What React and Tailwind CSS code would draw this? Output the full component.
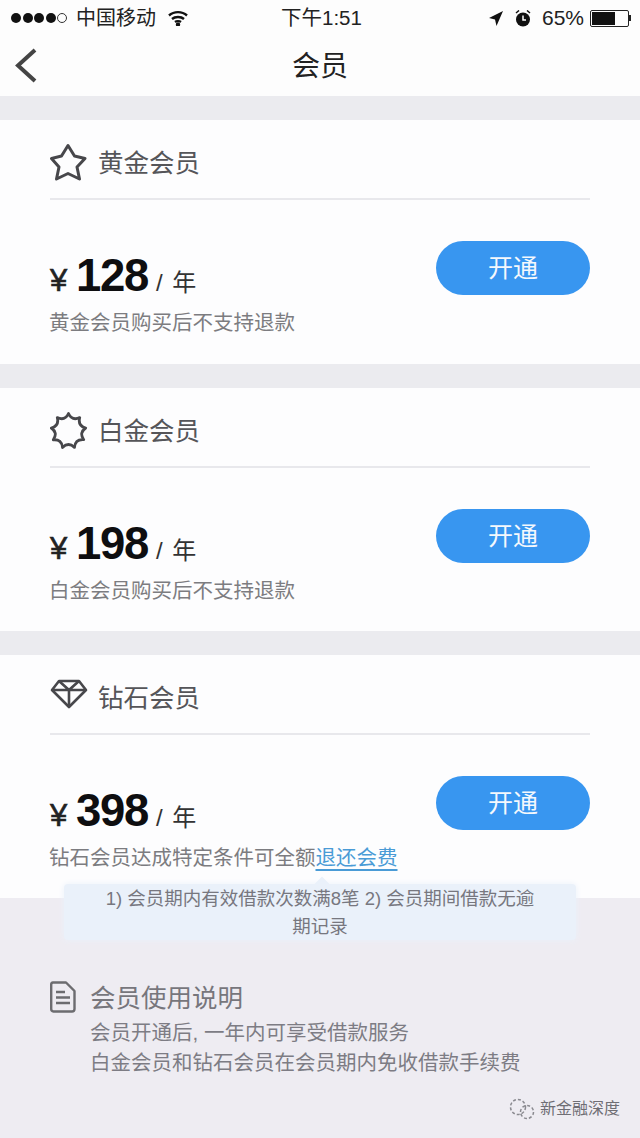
import React from "react";

const cjk = "font-['Liberation_Sans','Noto_Sans_CJK_SC',sans-serif]";

const StarIcon = () => (
  <svg width="38" height="40" viewBox="0 0 38 40" fill="none" stroke="#47474b" strokeWidth="3" strokeLinejoin="round">
    <path d="M18 2.500L24.500 13 35 15.500 27 24 29.500 36 18 30.500 6.500 36 9 24 1.500 15.500 11.500 13z" />
  </svg>
);

// nine pointed scalloped badge
const badgePath = () => {
  const pt = (r, a) => `${(18.5 + r * Math.sin(a)).toFixed(1)} ${(19 - r * Math.cos(a)).toFixed(1)}`;
  let d = `M${pt(17.5, 0)}`;
  for (let i = 0; i < 9; i++) {
    const step = (Math.PI * 2) / 9;
    d += `Q${pt(10.5, step * (i + 0.5))} ${pt(17.5, step * (i + 1))}`;
  }
  return d + "z";
};

const BadgeIcon = () => (
  <svg width="38" height="38" viewBox="0 0 38 38" fill="none" stroke="#47474b" strokeWidth="2.800" strokeLinejoin="round">
    <path d={badgePath()} />
  </svg>
);

const DiamondIcon = () => (
  <svg width="38" height="30" viewBox="0 0 38 30" fill="none" stroke="#47474b" strokeWidth="2.600" strokeLinejoin="round">
    <path d="M9 2h20l7 9-17 17L2 11z" />
    <path d="M2 11h34M9 2l10 9 10-9M19 11v17" />
  </svg>
);

const plans = [
  { name: "黄金会员", price: "128", note: "黄金会员购买后不支持退款", icon: <StarIcon />, height: "h-[244px]" },
  { name: "白金会员", price: "198", note: "白金会员购买后不支持退款", icon: <BadgeIcon />, height: "h-[243px]" },
  { name: "钻石会员", price: "398", note: "钻石会员达成特定条件可全额", link: "退还会费", icon: <DiamondIcon />, height: "h-[243px]", iconUp: true },
];

const PlanCard = ({ plan }) => (
  <div className={`${plan.height} bg-[#fdfdfe] px-[50px]`}>
    <div className="h-[80px] border-b-2 border-[#e8e8ec] flex items-center">
      <div className={`w-[38px] h-[38px] flex items-center justify-center ${plan.iconUp ? "mt-[-1px]" : "mt-[7px]"}`}>{plan.icon}</div>
      <span className="ml-[10px] mt-[7px] text-[25.500px] leading-[30px] text-[#555559]">{plan.name}</span>
    </div>
    <div className="flex justify-between pt-[41px]">
      <div>
        <div className="flex items-baseline h-[66px] pt-[7px]">
          <span className="text-[31px] leading-[40px] text-[#222] w-[26px] [-webkit-text-stroke:0.6px_#222]">¥</span>
          <span className="text-[45.500px] leading-[56px] font-bold text-[#0e0e10] tracking-[-1.300px]">{plan.price}</span>
          <span className="ml-[8px] text-[24px] text-[#333] [word-spacing:3px]">/ 年</span>
        </div>
        <p className="mt-[1px] -ml-px text-[20.500px] leading-[30px] text-[#7c7c80] whitespace-nowrap">
          {plan.note}
          {plan.link && <span className="text-[#4a9bd6] underline underline-offset-4">{plan.link}</span>}
        </p>
      </div>
      <button className="w-[154px] h-[54px] rounded-full bg-[#3896f0] text-[#f4f8fd] text-[25px] pt-[1px]">开通</button>
    </div>
  </div>
);

export default function App() {
  return (
    <div className={`${cjk} relative w-[640px] h-[1138px] overflow-hidden bg-[#eeecf2]`}>
      {/* status bar */}
      <div className="h-[36px] bg-[#fdfdfd] flex items-center justify-between pl-[11px] pr-[9px] text-[20px] text-[#222] relative">
        <div className="flex items-center">
          <span className="flex gap-[1.500px] items-center">
            <i className="w-[10px] h-[10px] rounded-full bg-[#111]" />
            <i className="w-[10px] h-[10px] rounded-full bg-[#111]" />
            <i className="w-[10px] h-[10px] rounded-full bg-[#111]" />
            <i className="w-[10px] h-[10px] rounded-full bg-[#111]" />
            <i className="w-[10px] h-[10px] rounded-full border border-[#333]" />
          </span>
          <span className="ml-[9px]">中国移动</span>
          <svg className="ml-[12px]" width="20" height="16" viewBox="0 0 20 16" fill="none" stroke="#111" strokeWidth="2.400">
            <path d="M1 5.500c5-4.500 13-4.500 18 0M4 9c3-2.600 9-2.600 12 0M7 12c1.600-1.200 4.400-1.200 6 0" />
            <circle cx="10" cy="14.500" r="1" fill="#111" />
          </svg>
        </div>
        <span className="absolute left-[281px] top-[5px] text-[20.500px] leading-[26px]">下午1:51</span>
        <div className="flex items-center">
          <svg width="14" height="15" viewBox="0 0 14 15" fill="#111">
            <path d="M14 0L0 7l6 1.500L7.500 15z" />
          </svg>
          <svg className="ml-[12px]" width="16" height="17" viewBox="0 0 16 17">
            <circle cx="8" cy="9.500" r="7" fill="#111" />
            <path d="M8 5.500v4.500h3" stroke="#fff" strokeWidth="1.500" fill="none" />
            <path d="M1 3l3-2.500M15 3l-3-2.500" stroke="#111" strokeWidth="1.500" />
          </svg>
          <span className="ml-[11px] text-[21px]">65%</span>
          <span className="ml-[6px] w-[39px] h-[17px] border border-[#222] rounded-[2px] p-[1px] flex">
            <span className="w-[65%] bg-[#111]" />
          </span>
          <span className="w-[2px] h-[6px] bg-[#222]" />
        </div>
      </div>

      {/* nav bar */}
      <div className="h-[60px] bg-[#fdfdfd] relative flex items-center justify-center">
        <svg className="absolute left-[14px] top-[12px]" width="24" height="36" viewBox="0 0 24 36" fill="none" stroke="#444" strokeWidth="4">
          <path d="M21 2L4 17.500 21 33" />
        </svg>
        <span className="text-[28px] leading-[34px] text-[#222] mt-[2px]">会员</span>
      </div>

      <div className="pt-[24px] bg-[#ebebef] flex flex-col gap-[24px]">
        {plans.map((plan) => (
          <PlanCard key={plan.name} plan={plan} />
        ))}
      </div>

      {/* usage notes */}
      <div className="pl-[50px] pt-[82px] flex text-[#7d7c84]">
        <svg className="mt-[1px]" width="26" height="32" viewBox="0 0 26 32" fill="none" stroke="#6c6c70" strokeWidth="2.400" strokeLinejoin="round">
          <path d="M3 1.500h13l8.500 8.500v18a2.500 2.500 0 0 1-2.500 2.500H3.500A2.500 2.500 0 0 1 1.200 28V3.500A2 2 0 0 1 3 1.500z" />
          <path d="M6 11h9M6 16.500h14M6 22h14" />
        </svg>
        <div className="ml-[14px]">
          <div className="text-[25.500px] leading-[36px] text-[#77767c]">会员使用说明</div>
          <div className="mt-[2px] text-[20.500px] leading-[30px] whitespace-nowrap">会员开通后, 一年内可享受借款服务</div>
          <div className="text-[20.500px] leading-[30px] whitespace-nowrap">白金会员和钻石会员在会员期内免收借款手续费</div>
        </div>
      </div>

      {/* tooltip over the notes */}
      <div className="absolute left-[64px] top-[884px] w-[512px] h-[56px] rounded-[4px] bg-[#eaf1fa] shadow-[0_0_6px_#eaf1fa] px-[36px] pt-[1px] text-center text-[18.500px] leading-[28px] text-[#77777f]">
        <i className="absolute left-[252px] top-[-5px] w-[12px] h-[12px] rotate-45 bg-[#eaf1fa]" />
        <span className="relative">1) 会员期内有效借款次数满8笔 2) 会员期间借款无逾期记录</span>
      </div>

      {/* watermark */}
      <div className="absolute right-[20px] bottom-[17px] flex items-center text-[16px] text-[#6f6e74]">
        <svg width="28" height="22" viewBox="0 0 28 22" fill="none" stroke="#8a8a90" strokeWidth="1.500" strokeDasharray="3 2">
          <circle cx="10" cy="9" r="7.500" />
          <circle cx="19" cy="14" r="6.500" />
        </svg>
        <span className="ml-[4px]">新金融深度</span>
      </div>
    </div>
  );
}
